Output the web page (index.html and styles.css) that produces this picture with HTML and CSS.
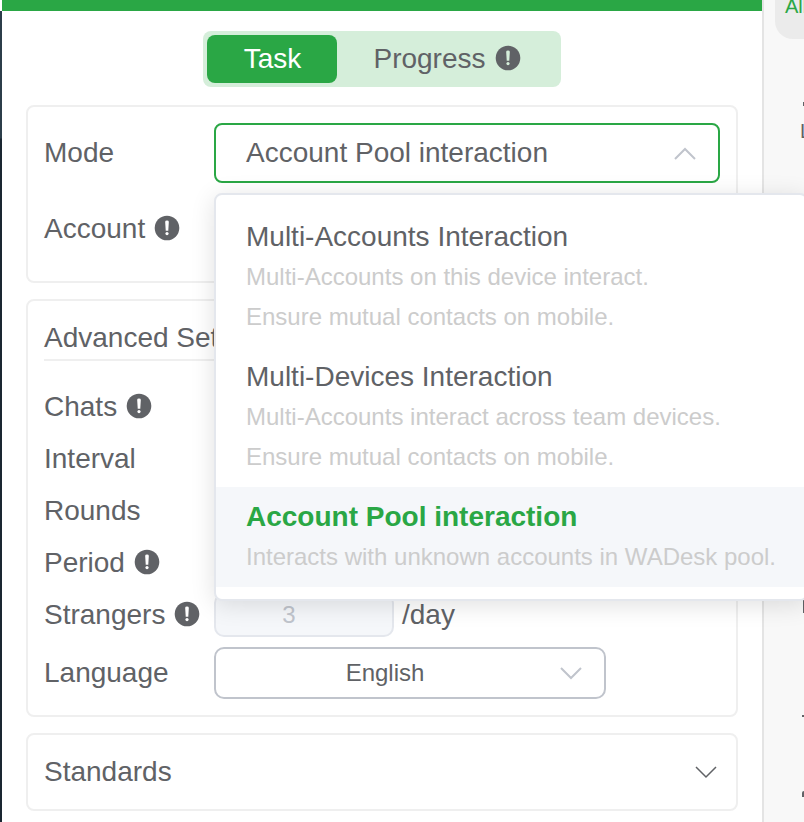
FILE: index.html
```html
<!DOCTYPE html>
<html lang="en">
<head>
<meta charset="utf-8">
<title>Task settings</title>
<link rel="stylesheet" href="styles.css">
</head>
<body>
<svg class="sprite" aria-hidden="true">
  <symbol id="info" viewBox="0 0 26 26">
    <circle cx="13" cy="13" r="12.3" fill="currentColor"/>
    <path d="M11.2 6.8q0-1.3 1.8-1.3t1.8 1.3l-.5 9h-2.6z" fill="var(--mark)"/>
    <circle cx="13" cy="18.6" r="1.6" fill="var(--mark)"/>
  </symbol>
  <symbol id="down" viewBox="0 0 24 24">
    <path d="M2 7l10 10L22 7" fill="none" stroke="currentColor"/>
  </symbol>
  <symbol id="up" viewBox="0 0 24 24">
    <path d="M2 18L12 8l10 10" fill="none" stroke="currentColor"/>
  </symbol>
</svg>
<div class="backdrop"></div>
<main class="panel">
  <div class="tabs" role="tablist">
    <button class="tab active" type="button" role="tab" aria-selected="true">Task</button>
    <button class="tab" type="button" role="tab" aria-selected="false">Progress <svg class="info"><use href="#info"/></svg></button>
  </div>

  <section class="card mode-card">
    <div class="row tall">
      <label class="name" for="mode">Mode</label>
      <div class="picker">
        <button class="mode" id="mode" type="button" aria-haspopup="listbox" aria-expanded="true">Account Pool interaction <svg class="chevron"><use href="#up"/></svg></button>
        <ul class="menu" role="listbox" aria-label="Mode">
          <li class="option" role="option" aria-selected="false">
            <span class="option-title">Multi-Accounts Interaction</span>
            <span>Multi-Accounts on this device interact.</span>
            <span>Ensure mutual contacts on mobile.</span>
          </li>
          <li class="option" role="option" aria-selected="false">
            <span class="option-title">Multi-Devices Interaction</span>
            <span>Multi-Accounts interact across team devices.</span>
            <span>Ensure mutual contacts on mobile.</span>
          </li>
          <li class="option selected" role="option" aria-selected="true">
            <span class="option-title">Account Pool interaction</span>
            <span>Interacts with unknown accounts in WADesk pool.</span>
          </li>
        </ul>
      </div>
    </div>
    <div class="row tall"><span class="name">Account <svg class="info"><use href="#info"/></svg></span></div>
  </section>

  <section class="card">
    <h2 class="heading">Advanced Settings</h2>
    <div class="row"><span class="name">Chats <svg class="info"><use href="#info"/></svg></span></div>
    <div class="row"><span class="name">Interval</span></div>
    <div class="row"><span class="name">Rounds</span></div>
    <div class="row"><span class="name">Period <svg class="info"><use href="#info"/></svg></span></div>
    <div class="row">
      <label class="name" for="strangers">Strangers <svg class="info"><use href="#info"/></svg></label>
      <input class="amount" id="strangers" type="text" value="3" disabled>
      <span class="unit">/day</span>
    </div>
    <div class="row language">
      <label class="name" for="language">Language</label>
      <div class="select">
        <select id="language"><option>English</option></select>
        <svg class="chevron"><use href="#down"/></svg>
      </div>
    </div>
  </section>

  <section class="card">
    <button class="standards" type="button" aria-expanded="false">Standards <svg class="chevron"><use href="#down"/></svg></button>
  </section>
</main>
<aside class="side">
  <a class="pill" href="#">All</a>
  <span class="edge dot"></span>
  <p class="side-item">L</p>
  <span class="edge stem"></span>
  <span class="edge dash"></span>
  <span class="edge corner"></span>
</aside>
</body>
</html>
```

FILE: styles.css
```css
* { box-sizing: border-box; }

:root {
  --green: #2aa745;
  --text: #606266;
  --line: #efefef;
  --mark: #fff;
}

body {
  margin: 0;
  min-height: 100vh;
  display: flex;
  overflow: hidden;
  background: #fff;
  color: var(--text);
  font: 28px/42px "Liberation Sans", Arial, sans-serif;
}

button, input, select { font: inherit; color: inherit; margin: 0; }
button { border: 0; background: none; cursor: pointer; }

.sprite { position: absolute; width: 0; height: 0; }

.backdrop {
  width: 2px;
  flex: none;
  background: linear-gradient(#fff 11px, #2c3e4a 11px, #2c3e4a 138px, #1a2631 139px);
}

.panel {
  flex: 1;
  min-width: 0;
  border-top: 11px solid var(--green);
  padding: 20px 24px 0;
  display: flex;
  flex-direction: column;
  gap: 16px;
}

.tabs {
  --mark: #d5eeda;
  align-self: center;
  display: flex;
  padding: 4px;
  margin-bottom: 2px;
  border-radius: 8px;
  background: #d5eeda;
}

.tab {
  display: flex;
  align-items: center;
  justify-content: center;
  gap: 9px;
  min-width: 130px;
  height: 48px;
  padding: 0 36px;
  border-radius: 8px;
}

.tab.active { background: var(--green); color: #fff; }

.info { width: 26px; height: 26px; flex: none; margin-bottom: 2px; }
.chevron { width: 24px; height: 24px; flex: none; stroke-width: 2px; }

.card {
  border: 2px solid var(--line);
  border-radius: 8px;
  padding: 16px;
}

.mode-card { padding-bottom: 22px; display: grid; gap: 16px; }

.row { display: flex; align-items: center; height: 52px; }
.row.tall { height: 60px; }
.row.language { margin-top: 6px; }

.name {
  width: 170px;
  flex: none;
  display: flex;
  align-items: center;
  gap: 9px;
}

.heading {
  margin: 0 0 20px;
  border-bottom: 2px solid var(--line);
  font-size: 28px;
  font-weight: 400;
}

.picker { position: relative; flex: 1; }

.mode {
  width: 100%;
  height: 60px;
  display: flex;
  align-items: center;
  justify-content: space-between;
  padding: 0 21px 0 30px;
  border: 2px solid var(--green);
  border-radius: 8px;
}

.mode .chevron, .select .chevron { color: #c0c4cc; }

.menu {
  position: absolute;
  z-index: 1;
  top: 70px;
  left: 0;
  width: max-content;
  margin: 0;
  padding: 12px 0;
  list-style: none;
  background: #fff;
  border: 2px solid #e4e7ed;
  border-radius: 8px;
  box-shadow: 0 4px 24px rgba(0, 0, 0, 0.12);
}

.option {
  display: flex;
  flex-direction: column;
  padding: 10px 30px;
  color: #ccc;
  font-size: 24px;
  line-height: 40px;
}

.option-title { color: var(--text); font-size: 28px; }
.option.selected { background: #f5f7fa; }
.selected .option-title { color: var(--green); font-weight: 700; }

.amount {
  width: 180px;
  height: 44px;
  border: 2px solid #e4e7ed;
  border-radius: 10px;
  background: #f5f7fa;
  color: #c0c4cc;
  font-size: 24px;
  text-align: center;
  padding: 0 30px 0 0;
}

.unit { margin-left: 8px; }

.select {
  display: grid;
  align-items: center;
  width: 392px;
}

.select select {
  grid-area: 1 / 1;
  appearance: none;
  width: 100%;
  height: 52px;
  padding: 0 50px 0 0;
  border: 2px solid #c0c4cc;
  border-radius: 10px;
  background: #fff;
  font-size: 24px;
  text-align-last: center;
}

.select .chevron {
  grid-area: 1 / 1;
  justify-self: end;
  margin-right: 23px;
  pointer-events: none;
}

.standards {
  width: 100%;
  display: flex;
  align-items: center;
  justify-content: space-between;
  padding: 0 2px 0 0;
}

.standards .chevron { stroke-width: 1.5px; }

.side {
  width: 42px;
  flex: none;
  display: flex;
  flex-direction: column;
  overflow: hidden;
  border-left: 2px solid #e4e4e4;
  background: #f8f8f8;
  font-size: 20px;
  line-height: 24px;
  white-space: nowrap;
}

.pill {
  height: 39px;
  margin-left: 11px;
  padding-left: 10px;
  border-bottom-left-radius: 18px;
  background: #ebebeb;
  color: var(--green);
  line-height: 12px;
  text-decoration: none;
}

.side-item { margin: 13px 0 0 36px; }

/* Left edges of the list entries that run past the window */
.edge { align-self: flex-end; flex: none; background: var(--text); }
.dot { width: 1px; height: 4px; margin-top: 63px; }
.stem { width: 1px; height: 13px; margin-top: 457px; }
.dash { width: 2px; height: 2px; margin-top: 102px; }
.corner { width: 2px; height: 6px; margin-top: 74px; border-top-left-radius: 2px; }
```
